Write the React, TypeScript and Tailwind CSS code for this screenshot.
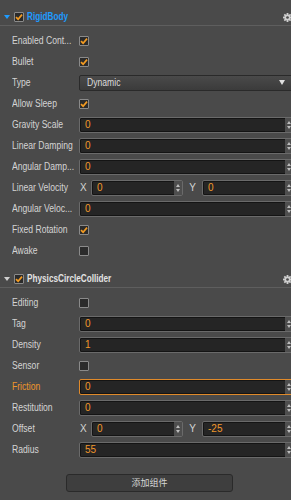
import type { ReactNode } from "react";

const font = { fontFamily: '"Liberation Sans", Arial, sans-serif' };

function Check({ on }: { on?: boolean }) {
  return (
    <span className="flex h-[10px] w-[10px] shrink-0 items-center justify-center rounded-[1px] border border-[#8a8a8a] bg-[#2b2b2b]">
      {on && (
        <svg width="8" height="8" viewBox="0 0 8 8">
          <path d="M1 4.2 L3.1 6.2 L7 1.6" fill="none" stroke="#f39b22" strokeWidth="1.7" />
        </svg>
      )}
    </span>
  );
}

function Gear() {
  return (
    <svg width="9" height="9" viewBox="0 0 10 10" className="shrink-0">
      <g fill="#cfcfcf">
        <circle cx="5" cy="5" r="3.4" />
        <rect x="4" y="0" width="2" height="10" />
        <rect x="0" y="4" width="10" height="2" />
        <rect x="4" y="0" width="2" height="10" transform="rotate(45 5 5)" />
        <rect x="4" y="0" width="2" height="10" transform="rotate(-45 5 5)" />
      </g>
      <circle cx="5" cy="5" r="1.5" fill="#4a4a4a" />
    </svg>
  );
}

function Spinner() {
  return (
    <div className="flex w-[8px] shrink-0 flex-col items-center justify-center gap-[2px] bg-[#4e4e4e]">
      <span className="h-0 w-0 border-x-[2px] border-b-[3px] border-x-transparent border-b-[#bdbdbd]" />
      <span className="h-0 w-0 border-x-[2px] border-t-[3px] border-x-transparent border-t-[#bdbdbd]" />
    </div>
  );
}

function Input({ value, hot }: { value: string; hot?: boolean }) {
  return (
    <div
      className={`flex h-[16px] min-w-0 flex-1 rounded-[2px] border ${
        hot ? "border-[#e08a2a]" : "border-[#6a6a6a]"
      } bg-[#252525] shadow-[inset_0_0_0_1px_#141414]`}
    >
      <div className="flex flex-1 items-center pl-[5px] text-[10px] leading-none text-[#f0972b]">{value}</div>
      <Spinner />
    </div>
  );
}

function Row({ label, hot, children }: { label: string; hot?: boolean; children: ReactNode }) {
  return (
    <div className="flex h-[21px] items-center">
      <div className="flex w-[79px] shrink-0 items-center whitespace-nowrap pl-[12px]">
        <span
          className={`inline-block origin-left scale-x-[0.86] text-[10px] leading-none ${
            hot ? "text-[#f0972b]" : "text-[#d4d4d4]"
          }`}
        >
          {label}
        </span>
      </div>
      <div className="flex min-w-0 flex-1 items-center">{children}</div>
    </div>
  );
}

function Vec({ x, y }: { x: string; y: string }) {
  return (
    <>
      <span className="w-[12px] shrink-0 pl-[1px] text-[10px] leading-none text-[#d4d4d4]">X</span>
      <Input value={x} />
      <span className="w-[19px] shrink-0 text-center text-[10px] leading-none text-[#d4d4d4]">Y</span>
      <Input value={y} />
    </>
  );
}

function Header({ title, blue }: { title: string; blue?: boolean }) {
  return (
    <div className="box-content flex h-[16px] items-center border-b border-[#5e5e5e] pr-[2px]">
      <span
        className={`ml-[4px] mr-[4px] h-0 w-0 border-x-[3px] border-t-[4px] border-x-transparent ${
          blue ? "border-t-[#1e9bff]" : "border-t-[#d0d0d0]"
        }`}
      />
      <Check on />
      <span className="ml-[3px] flex flex-1 items-center whitespace-nowrap">
        <span
          className={`inline-block origin-left scale-x-[0.82] text-[10px] font-bold leading-none ${
            blue ? "text-[#1e9bff]" : "text-[#e2e2e2]"
          }`}
        >
          {title}
        </span>
      </span>
      <Gear />
    </div>
  );
}

export default function App() {
  return (
    <div className="h-[500px] w-[291px] overflow-hidden bg-[#4a4a4a]" style={font}>
      <div className="w-[294px] pt-[9px]">
        <Header title="RigidBody" blue />
        <div className="pt-[4px]">
          <Row label="Enabled Cont...">
            <Check on />
          </Row>
          <Row label="Bullet">
            <Check on />
          </Row>
          <Row label="Type">
            <div className="flex h-[16px] flex-1 items-center justify-between rounded-[2px] border border-[#2a2a2a] bg-gradient-to-b from-[#4a4a4a] to-[#3b3b3b] pl-[7px] pr-[8px]">
              <span className="inline-block origin-left scale-x-[0.86] text-[10px] leading-none text-[#dcdcdc]">Dynamic</span>
              <span className="h-0 w-0 border-x-[3px] border-t-[5px] border-x-transparent border-t-[#e0e0e0]" />
            </div>
          </Row>
          <Row label="Allow Sleep">
            <Check on />
          </Row>
          <Row label="Gravity Scale">
            <Input value="0" />
          </Row>
          <Row label="Linear Damping">
            <Input value="0" />
          </Row>
          <Row label="Angular Damp...">
            <Input value="0" />
          </Row>
          <Row label="Linear Velocity">
            <Vec x="0" y="0" />
          </Row>
          <Row label="Angular Veloc...">
            <Input value="0" />
          </Row>
          <Row label="Fixed Rotation">
            <Check on />
          </Row>
          <Row label="Awake">
            <Check />
          </Row>
        </div>

        <div className="mt-[10px]">
          <Header title="PhysicsCircleCollider" />
        </div>
        <div className="pt-[4px]">
          <Row label="Editing">
            <Check />
          </Row>
          <Row label="Tag">
            <Input value="0" />
          </Row>
          <Row label="Density">
            <Input value="1" />
          </Row>
          <Row label="Sensor">
            <Check />
          </Row>
          <Row label="Friction" hot>
            <Input value="0" hot />
          </Row>
          <Row label="Restitution">
            <Input value="0" />
          </Row>
          <Row label="Offset">
            <Vec x="0" y="-25" />
          </Row>
          <Row label="Radius">
            <Input value="55" />
          </Row>
        </div>

        <div className="mt-[14px] pl-[66px]">
          <button
            type="button"
            className="flex h-[18px] w-[167px] items-center justify-center rounded-[3px] border border-[#2a2a2a] bg-[#3e3e3e] text-[9px] text-[#d6d6d6]"
            style={{ fontFamily: '"Noto Sans CJK SC", sans-serif' }}
          >
            添加组件
          </button>
        </div>
      </div>
    </div>
  );
}
